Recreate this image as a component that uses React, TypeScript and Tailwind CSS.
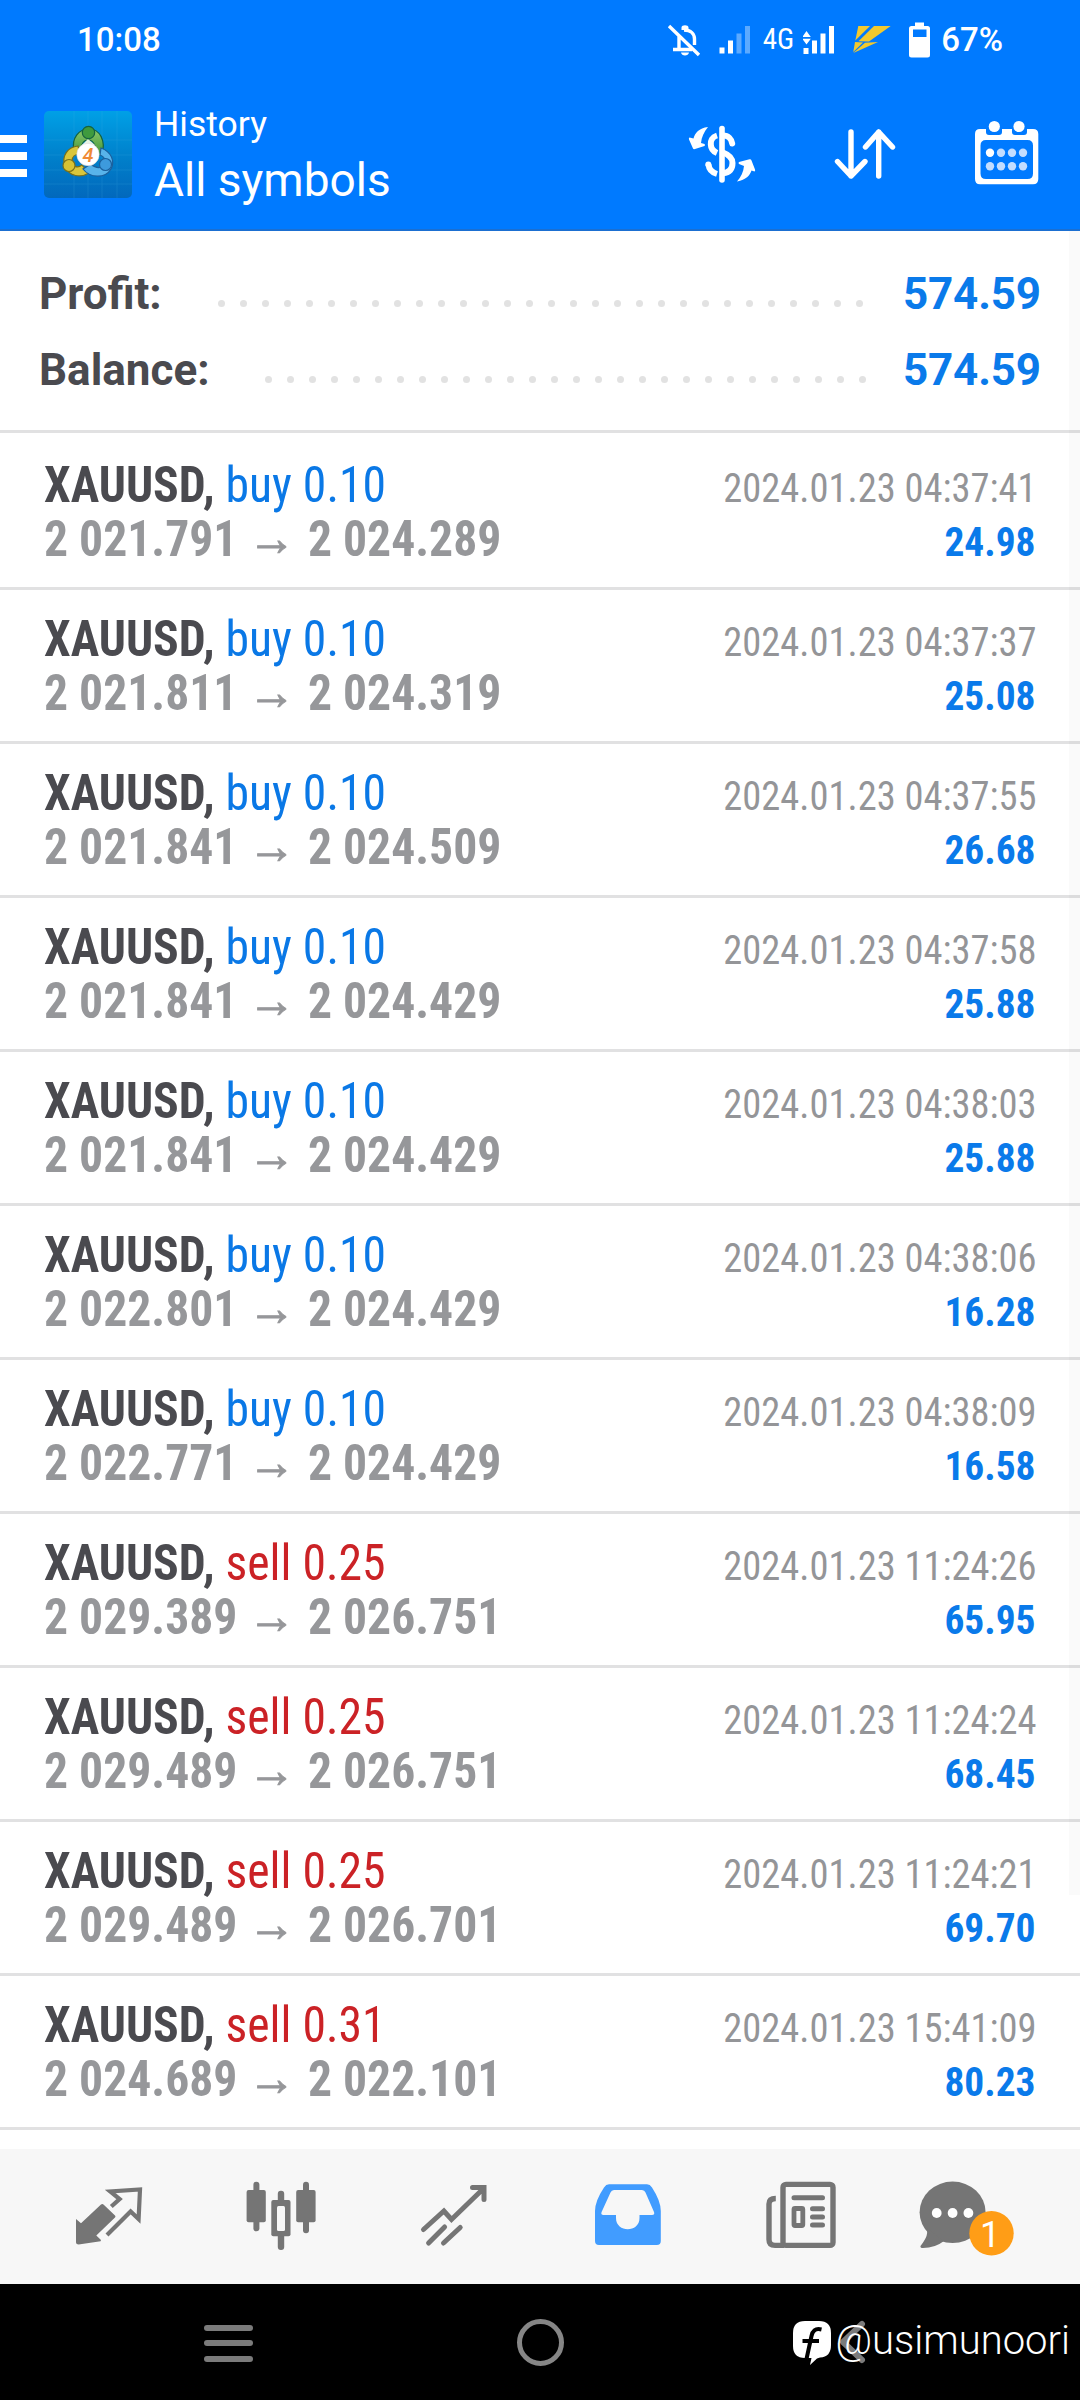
import type { ReactNode } from 'react';
import clsx from 'clsx';

type Deal = {
  side: 'buy' | 'sell';
  volume: string;
  open: string;
  close: string;
  time: string;
  profit: string;
};

const deals: Deal[] = [
  { side: 'buy', volume: '0.10', open: '2 021.791', close: '2 024.289', time: '2024.01.23 04:37:41', profit: '24.98' },
  { side: 'buy', volume: '0.10', open: '2 021.811', close: '2 024.319', time: '2024.01.23 04:37:37', profit: '25.08' },
  { side: 'buy', volume: '0.10', open: '2 021.841', close: '2 024.509', time: '2024.01.23 04:37:55', profit: '26.68' },
  { side: 'buy', volume: '0.10', open: '2 021.841', close: '2 024.429', time: '2024.01.23 04:37:58', profit: '25.88' },
  { side: 'buy', volume: '0.10', open: '2 021.841', close: '2 024.429', time: '2024.01.23 04:38:03', profit: '25.88' },
  { side: 'buy', volume: '0.10', open: '2 022.801', close: '2 024.429', time: '2024.01.23 04:38:06', profit: '16.28' },
  { side: 'buy', volume: '0.10', open: '2 022.771', close: '2 024.429', time: '2024.01.23 04:38:09', profit: '16.58' },
  { side: 'sell', volume: '0.25', open: '2 029.389', close: '2 026.751', time: '2024.01.23 11:24:26', profit: '65.95' },
  { side: 'sell', volume: '0.25', open: '2 029.489', close: '2 026.751', time: '2024.01.23 11:24:24', profit: '68.45' },
  { side: 'sell', volume: '0.25', open: '2 029.489', close: '2 026.701', time: '2024.01.23 11:24:21', profit: '69.70' },
  { side: 'sell', volume: '0.31', open: '2 024.689', close: '2 022.101', time: '2024.01.23 15:41:09', profit: '80.23' },
];

function BellOffIcon() {
  return (
    <svg width="36" height="36" viewBox="0 0 36 36" fill="none" stroke="#fff" strokeWidth="3.4">
      <path d="M3 4L33 33M13 13V27M7 27.5H26M18 8C25 8 28.5 12 28.5 17V23" />
      <path d="M15.5 8V5.5C15.5 2.5 22.5 2.5 22.5 5.5V8ZM15 30.5H23C22.5 34.5 15.5 34.5 15 30.5Z" fill="#fff" stroke="none" />
    </svg>
  );
}

function SignalIcon({ weak = false }: { weak?: boolean }) {
  return (
    <svg width="32" height="30" viewBox="0 0 32 30" fill="#fff">
      <rect x="0.5" y={weak ? 22.5 : 23} width="5" height="6" />
      <rect x="9" y="15.5" width="5" height="13" />
      <rect x="17.5" y="8.5" width="5" height="20" opacity={weak ? 0.36 : 1} />
      <rect x="26" y="1" width="5" height="27.5" opacity={weak ? 0.36 : 1} />
      {!weak && <path d="M3.5 6L7.8 12H-.8ZM3.5 19.5L7.8 13.8H-.8Z" />}
    </svg>
  );
}

function CarrierLogo() {
  return (
    <svg width="40" height="32" viewBox="0 0 40 32" fill="#f2c92e">
      <path d="M6.3 2H18L3.3 16.5Z" />
      <path d="M22 2H38.7L17 17.5L6.5 17.2Z" />
      <path d="M1.3 28L3 18L11 18.5Z" />
      <path d="M13 18.7L26 18L1.3 29Z" />
    </svg>
  );
}

function BatteryIcon() {
  return (
    <svg width="21" height="36" viewBox="0 0 21 36">
      <path
        d="M6 .5H15V4H18.5Q21 4 21 6.5V33Q21 35.5 18.5 35.5H2.5Q0 35.5 0 33V6.5Q0 4 2.5 4H6ZM4 7.5V15H17.5V7.5Z"
        fill="#fff"
        fillRule="evenodd"
      />
    </svg>
  );
}

function AppIcon() {
  return (
    <svg width="88" height="87" viewBox="0 0 88 87">
      <defs>
        <linearGradient id="tile" x1="0" y1="0" x2="0" y2="1">
          <stop offset="0" stopColor="#00a0e6" />
          <stop offset="0.55" stopColor="#007fca" />
          <stop offset="1" stopColor="#0268bc" />
        </linearGradient>
        <linearGradient id="green" x1="0" y1="0" x2="0" y2="1">
          <stop offset="0" stopColor="#8cc96a" />
          <stop offset="1" stopColor="#3a8f35" />
        </linearGradient>
      </defs>
      <rect width="88" height="87" rx="5" fill="url(#tile)" />
      <path d="M30 0V87M44 0V87M58 0V87M73 0V87M0 29H88M0 44H88M0 59H88M0 73H88" stroke="#48b4e8" strokeWidth="0.7" opacity="0.25" />
      <g stroke="#14623f" strokeWidth="1.2">
        <path d="M30 40C27 27 35 18 45 18C56 18 62 30 58 43L51 46C53 36 50 29 44 29C39 29 37 34 37 40Z" fill="url(#green)" />
        <path d="M38 34L44 28L51 34Z" fill="#e8f3e4" stroke="none" />
        <circle cx="44.5" cy="21.5" r="6.2" fill="#3f9a3e" />
        <path d="M34 35C24 36 17 45 21 55C25 66 37 67 45 62L38 54C33 58 28 55 28 50C28 46 31 43 36 43Z" fill="#d9c63c" stroke="#77701c" />
        <circle cx="25" cy="54.5" r="6" fill="#d6c233" stroke="#77701c" />
        <path d="M57 37C68 41 71 51 67 58C61 68 46 67 39 58L47 53C53 59 61 57 61 51C61 47 59 45 56 44Z" fill="#58b3ea" stroke="#1b5f9c" />
        <circle cx="61.5" cy="53.5" r="6" fill="#3d9add" stroke="#1b5f9c" />
      </g>
      <circle cx="44" cy="43.5" r="11.2" fill="#fff" stroke="#d8d8d8" strokeWidth="0.6" />
      <text x="44" y="50.5" fontSize="20" fontStyle="italic" fontWeight="500" textAnchor="middle" fill="#f08a35">
        4
      </text>
    </svg>
  );
}

function CurrencyIcon() {
  return (
    <svg width="90" height="75" viewBox="0 0 90 75" fill="none" stroke="#fff" strokeWidth="6">
      <path d="M42 13.5V65" strokeWidth="5.6" strokeLinecap="round" />
      <path d="M37 20.5C32 22 30.5 26 30.8 29.5C31 34 33.5 36.5 37 38" />
      <path d="M43 20.5C48.5 20.5 51.5 24 52.2 28.5" strokeLinecap="round" />
      <path d="M43 37.5C49.5 40 52.5 43 52.5 48C52.5 54 49.5 57.5 43 58.3" />
      <path d="M28.5 49.5C29 54.5 32 57.5 37 59" />
      <circle cx="28.3" cy="49.5" r="3" fill="#fff" stroke="none" />
      <path
        d="M28 12C19 13 15 18 13.5 23.5L9.5 22.5Q8.5 23 9 24.5L13 33.5Q13.5 34.5 15 34L24.5 31Q25.5 30 24.5 29L21 28C21.5 22 24 17 28 12Z"
        fill="#fff"
        stroke="none"
      />
      <path
        d="M57 66.5C66 64.5 70 60.5 71.5 55.5L74.5 56.5Q75.5 56 75 54.5L71.5 45.5Q71 44 69.5 44.3L59 47Q58 48 59 49L64 51C63.5 57 61 62 57 66.5Z"
        fill="#fff"
        stroke="none"
      />
    </svg>
  );
}

function SortIcon() {
  return (
    <svg width="70" height="64" viewBox="0 0 70 64" fill="none" stroke="#fff" strokeWidth="5.4" strokeLinecap="round" strokeLinejoin="round">
      <path d="M21 12V56M7.5 41.5L21 56L35 41.5" />
      <path d="M48.7 56V12M35.5 27L48.7 12L62.5 27" />
    </svg>
  );
}

function CalendarIcon() {
  return (
    <svg width="64" height="66" viewBox="0 0 64 66">
      <path
        d="M5 9H11V12Q11 15 14 15H24Q27 15 27 12V9H37V12Q37 15 40 15H49Q52 15 52 12V9H58Q63.3 9 63.3 14V59Q63.3 64.3 58 64.3H5Q0 64.3 0 59V14Q0 9 5 9ZM11 20Q5.5 20 5.5 25.5V53.5Q5.5 59 11 59H52.5Q58 59 58 53.5V25.5Q58 20 52.5 20Z"
        fill="#fff"
        fillRule="evenodd"
      />
      <circle cx="19.3" cy="6.5" r="5.6" fill="#fff" />
      <circle cx="44" cy="6.5" r="5.6" fill="#fff" />
      {[15, 26, 37, 48].map((x) => (
        <g key={x} fill="#c3ddff">
          <circle cx={x} cy="32.7" r="4.2" fill={x === 15 ? '#fff' : undefined} />
          <circle cx={x} cy="46.3" r="4.2" />
        </g>
      ))}
    </svg>
  );
}

function TabIcon({ children }: { children: ReactNode }) {
  return (
    <div className="flex flex-1 justify-center">
      <svg width="96" height="90" viewBox="0 0 96 90" fill="#757575" className="overflow-visible">
        {children}
      </svg>
    </div>
  );
}

function StatusBar() {
  return (
    <div className="flex h-[79px] items-center justify-between pr-[77px] pl-[77px] text-[33px] font-medium">
      <span>10:08</span>
      <div className="flex items-center">
        <BellOffIcon />
        <span className="ml-[17px]">
          <SignalIcon weak />
        </span>
        <span className="ml-[12px] inline-block text-[29px] font-[450] font-stretch-condensed">4G</span>
        <span className="ml-[9px]">
          <SignalIcon />
        </span>
        <span className="ml-[17px]">
          <CarrierLogo />
        </span>
        <span className="ml-[17px]">
          <BatteryIcon />
        </span>
        <span className="ml-[11px]">67%</span>
      </div>
    </div>
  );
}

function Header() {
  return (
    <header className="h-[231px] border-b-2 border-[#1b6fd1] bg-[#007aff] text-white">
      <StatusBar />
      <div className="flex items-start">
        <div className="mt-[56px] flex w-[27px] flex-col gap-[9px]">
          <span className="h-2 bg-white" />
          <span className="h-2 bg-white" />
          <span className="h-2 bg-white" />
        </div>
        <div className="mt-8 ml-[17px]">
          <AppIcon />
        </div>
        <div className="mt-[22px] ml-[22px]">
          <p className="text-[35.5px] leading-[46px]">History</p>
          <h1 className="text-[46px] leading-[66px]">All symbols</h1>
        </div>
        <div className="mr-[41px] ml-auto flex items-start">
          <div className="mt-9">
            <CurrencyIcon />
          </div>
          <div className="mt-[41px] ml-[60px]">
            <SortIcon />
          </div>
          <div className="mt-[41px] ml-[75px]">
            <CalendarIcon />
          </div>
        </div>
      </div>
    </header>
  );
}

type SummaryLineProps = {
  label: string;
  value: string;
  dots: number;
  inset: string;
};

function SummaryLine({ label, value, dots, inset }: SummaryLineProps) {
  return (
    <div className="flex h-[76px] items-center text-[44px] font-bold">
      <span className="text-[#4a4a4f]">{label}</span>
      <div className={clsx('mt-[19px] ml-auto flex gap-[14.5px]', inset)}>
        {Array.from({ length: dots }, (_, i) => (
          <span key={i} className="size-[7.5px] rounded-full bg-[#e2e2e2]" />
        ))}
      </div>
      <span className="w-[136px] text-right tracking-[-0.2px] text-[#0a7aea]">{value}</span>
    </div>
  );
}

function DealRow({ deal, first }: { deal: Deal; first: boolean }) {
  return (
    <li className={clsx('border-b-[3px] border-[#e1e1e2] pr-[44px] pb-[21px] pl-[44px] font-stretch-condensed', first ? 'pt-[25px]' : 'pt-[22px]')}>
      <div className="flex h-[54px] items-baseline justify-between leading-[54px]">
        <div className="origin-left scale-x-[.953] text-[50px]">
          <span className="font-bold text-[#4a4a4f]">XAUUSD,</span>{' '}
          <span className={deal.side === 'buy' ? 'text-[#0a78e6]' : 'text-[#cb2226]'}>
            {deal.side} {deal.volume}
          </span>
        </div>
        <span className="origin-right scale-x-[.962] text-[40px] text-[#949598]">{deal.time}</span>
      </div>
      <div className="flex h-[54px] items-baseline justify-between leading-[54px]">
        <div className="flex origin-left scale-x-[.953] items-baseline text-[50px] font-bold text-[#96979a]">
          <span>{deal.open}</span>
          <span className="mr-[13px] ml-[11px] -translate-y-px [-webkit-text-stroke:1px_#96979a]">→</span>
          <span>{deal.close}</span>
        </div>
        <span className="mr-px origin-right scale-x-[.985] text-[40px] font-bold text-[#0a7aea]">{deal.profit}</span>
      </div>
    </li>
  );
}

function TabBar() {
  return (
    <nav className="flex h-[135px] items-center bg-[#f7f7f7] px-5">
      <TabIcon>
        <path d="M17 47L22 51.3L42 32.5Q43.5 31.5 45 33L56 43.5Q57 44.5 56 45.5L37.3 63.6L42 68L41.6 69.3L19.6 72.6Q17 72.6 17 70.5Z" />
        <path
          d="M52.3 34.5L60.6 27L51.3 19.5L81 17.5L79.6 47L71.6 39.5L48 63"
          fill="none"
          stroke="#757575"
          strokeWidth="4.2"
        />
      </TabIcon>
      <TabIcon>
        <rect x="14.6" y="18" width="19.2" height="32.3" rx="2" />
        <rect x="21.4" y="9.7" width="6" height="49.6" rx="3" />
        <rect x="64.2" y="18" width="19.4" height="32.3" rx="2" />
        <rect x="71" y="9.7" width="6" height="51.6" rx="3" />
        <rect x="45.8" y="18.7" width="6.4" height="59.3" rx="3" />
        <rect x="39.3" y="28" width="19.2" height="36.3" rx="2" />
        <rect x="45" y="34" width="8" height="25" rx="1.5" fill="#f7f7f7" />
      </TabIcon>
      <TabIcon>
        <path
          d="M18.5 57.5L38.9 39L46.5 47.5L78 17M67.5 15.5H79V27.5M23.6 71L39.6 55M38.5 71L55.2 55.5"
          fill="none"
          stroke="#757575"
          strokeWidth="5"
          strokeLinecap="round"
        />
      </TabIcon>
      <TabIcon>
        <path
          d="M30 12.3H68Q71 12.3 73 15.5Q81.8 29 81.8 39V69Q81.8 73 77.8 73H20Q16 73 16 69V39Q16 29 25 15.5Q27 12.3 30 12.3ZM35 18Q32.5 18 31.5 20.5L22.6 40Q21.5 43 24.5 43H37V46C37 61 60.5 61 60.5 46V43H73Q76 43 75 40L66.5 20.5Q65.5 18 63 18Z"
          fill="#419cff"
          fillRule="evenodd"
        />
      </TabIcon>
      <TabIcon>
        <g fill="none" stroke="#757575" strokeWidth="5.4">
          <rect x="31" y="12.4" width="50" height="61" rx="3" />
          <path d="M23.8 26.5Q17 26.5 17 32V67.5Q17 73.4 23 73.4H32" />
          <path d="M42 25.7H70.5M60.5 36.7H70.5M60.5 45H70.5M60.5 53H70.5" strokeLinecap="round" strokeWidth="5" />
          <rect x="42" y="36.5" width="8.8" height="17" rx="1" strokeWidth="4.8" />
        </g>
      </TabIcon>
      <TabIcon>
        <ellipse cx="27.6" cy="40.3" rx="33" ry="30.7" />
        <path d="M1 56Q5 62 -4.5 74Q-5 76 -2 76Q10 76 19 69Z" />
        <circle cx="11.7" cy="41" r="4.9" fill="#fff" />
        <circle cx="27.6" cy="41" r="4.9" fill="#fff" />
        <circle cx="43.4" cy="41" r="4.9" fill="#fff" />
        <circle cx="66.5" cy="61.3" r="22.2" fill="#ff9d16" />
        <text x="65" y="75" fontSize="36" textAnchor="middle" fill="#fff">
          1
        </text>
      </TabIcon>
    </nav>
  );
}

function Signature() {
  return (
    <div className="absolute top-[33px] right-[10px] flex items-start text-white">
      <svg width="38" height="48" viewBox="0 0 38 48">
        <path d="M12 4H26Q38 4 38 16V28Q38 40 27 40.5L24 41.5L17 48L18.5 41H12Q0 41 0 29V16Q0 4 12 4Z" fill="#fff" />
        <path d="M28.5 12.5C22 11 19.5 14 18.5 19L13.5 42M9.5 24H26" fill="none" stroke="#000" strokeWidth="4" />
      </svg>
      <span className="ml-1 text-[40px] leading-[48px] font-[350]">@usimunoori</span>
    </div>
  );
}

function SystemNav() {
  return (
    <footer className="relative flex h-[116px] items-center bg-black px-[72px]">
      <div className="flex flex-1 justify-center">
        <div className="mt-0.5 flex w-[49px] flex-col gap-[9.5px]">
          <span className="h-1.5 rounded-full bg-[#7b7b7b]" />
          <span className="h-1.5 rounded-full bg-[#7b7b7b]" />
          <span className="h-1.5 rounded-full bg-[#7b7b7b]" />
        </div>
      </div>
      <div className="flex flex-1 justify-center">
        <span className="size-[47px] rounded-full border-[5.5px] border-[#868686]" />
      </div>
      <div className="flex flex-1 justify-center">
        <svg width="28" height="44" viewBox="0 0 28 44" fill="none" stroke="#7b7b7b" strokeWidth="6" strokeLinecap="round" strokeLinejoin="round">
          <path d="M24 4L5 22L24 40" />
        </svg>
      </div>
      <Signature />
    </footer>
  );
}

export default function App() {
  return (
    <div className="flex h-[2400px] w-[1080px] flex-col overflow-hidden bg-white font-['Roboto',sans-serif]">
      <Header />
      <main className="relative h-[1919px] overflow-hidden">
        <section className="border-b-[3px] border-[#e1e1e2] pt-[25px] pr-[41px] pb-[22px] pl-[39px]">
          <SummaryLine label="Profit:" value="574.59" dots={30} inset="mr-[40px]" />
          <SummaryLine label="Balance:" value="574.59" dots={28} inset="mr-[37px]" />
        </section>
        <ul>
          {deals.map((deal, i) => (
            <DealRow key={deal.time} deal={deal} first={i === 0} />
          ))}
        </ul>
        {/* scrollbar track */}
        <div className="absolute top-0 right-0 h-[1664px] w-[11px] bg-black/[0.02]" />
      </main>
      <TabBar />
      <SystemNav />
    </div>
  );
}
